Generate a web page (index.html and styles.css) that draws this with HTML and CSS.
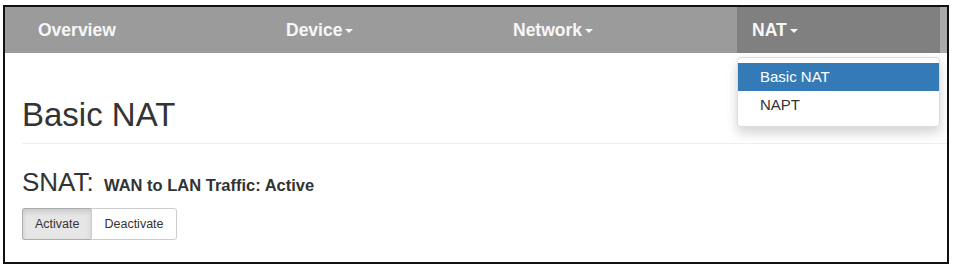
FILE: index.html
```html
<!DOCTYPE html>
<html>
<head>
<meta charset="utf-8">
<link rel="stylesheet" href="styles.css">
</head>
<body>
<div class="frame">
  <nav class="navbar">
    <div class="nav-item w-overview">Overview</div>
    <div class="nav-item w-device">Device<span class="caret"></span></div>
    <div class="nav-item w-network">Network<span class="caret"></span></div>
    <div class="nav-item w-nat active">NAT<span class="caret"></span>
      <ul class="dropdown">
        <li class="selected">Basic NAT</li>
        <li>NAPT</li>
      </ul>
    </div>
    <div class="nav-rest"></div>
  </nav>
  <main class="content">
    <h1 class="title">Basic NAT</h1>
    <hr class="divider">
    <h2 class="snat">SNAT: <small class="status">WAN to LAN Traffic: Active</small></h2>
    <div class="btn-group">
      <button class="btn pressed">Activate</button>
      <button class="btn">Deactivate</button>
    </div>
  </main>
</div>
</body>
</html>
```
FILE: styles.css
```css
html, body {
  margin: 0;
  padding: 0;
  background: #ffffff;
}
body {
  padding: 5px 6px 3px 3px;
  font-family: "Liberation Sans", Arial, sans-serif;
  color: #333333;
}
.frame {
  box-sizing: border-box;
  height: 259px;
  border: 2px solid #111111;
  position: relative;
  overflow: hidden;
}
.navbar {
  display: flex;
  height: 46px;
  background: #9b9b9b;
}
.nav-item {
  box-sizing: border-box;
  height: 46px;
  display: flex;
  align-items: center;
  color: #f7f7f7;
  font-weight: bold;
  font-size: 17.5px;
  position: relative;
}
.w-overview { width: 266px; padding-left: 33px; }
.w-device { width: 227px; padding-left: 15px; }
.w-network { width: 239px; padding-left: 15px; }
.w-nat { width: 203px; padding-left: 15px; }
.nav-item.active { background: #808080; }
.nav-rest {
  flex: 1;
  background: #a9a9a9;
}
.caret {
  display: inline-block;
  width: 0;
  height: 0;
  margin-left: 3px;
  margin-top: 2px;
  border-top: 4px solid #f7f7f7;
  border-left: 4px solid transparent;
  border-right: 4px solid transparent;
}
.dropdown {
  position: absolute;
  top: 50px;
  left: 0;
  width: 203px;
  box-sizing: border-box;
  margin: 0;
  padding: 5px 0 7px;
  list-style: none;
  background: #ffffff;
  border: 1px solid #dcdcdc;
  border-radius: 4px;
  box-shadow: 0 6px 12px rgba(0, 0, 0, 0.175);
  font-weight: normal;
  font-size: 15px;
  z-index: 5;
}
.dropdown li {
  height: 28px;
  line-height: 28px;
  padding-left: 22px;
  color: #333333;
}
.dropdown li.selected {
  background: #337ab7;
  color: #ffffff;
}
.content {
  padding-left: 17px;
}
.title {
  margin: 44px 0 0;
  font-size: 33px;
  font-weight: normal;
  line-height: 1.1;
  color: #333333;
}
.divider {
  margin: 10px 0 0;
  border: 0;
  border-top: 1px solid #eeeeee;
}
.snat {
  margin: 24px 0 0;
  font-size: 26px;
  font-weight: normal;
  line-height: 1.1;
  color: #333333;
}
.status {
  font-size: 16.5px;
  font-weight: bold;
  color: #333333;
  margin-left: 3px;
}
.btn-group {
  display: flex;
  margin-top: 11px;
}
.btn {
  box-sizing: border-box;
  height: 32px;
  font-family: "Liberation Sans", Arial, sans-serif;
  font-size: 12.5px;
  color: #333333;
  background: #ffffff;
  border: 1px solid #cccccc;
  padding: 0 12px;
  margin: 0;
}
.btn:first-child {
  border-radius: 3px 0 0 3px;
  border-right: 0;
}
.btn:last-child {
  border-radius: 0 3px 3px 0;
}
.btn.pressed {
  background: #e6e6e6;
  border-color: #adadad;
  box-shadow: inset 0 3px 5px rgba(0, 0, 0, 0.125);
}
```
